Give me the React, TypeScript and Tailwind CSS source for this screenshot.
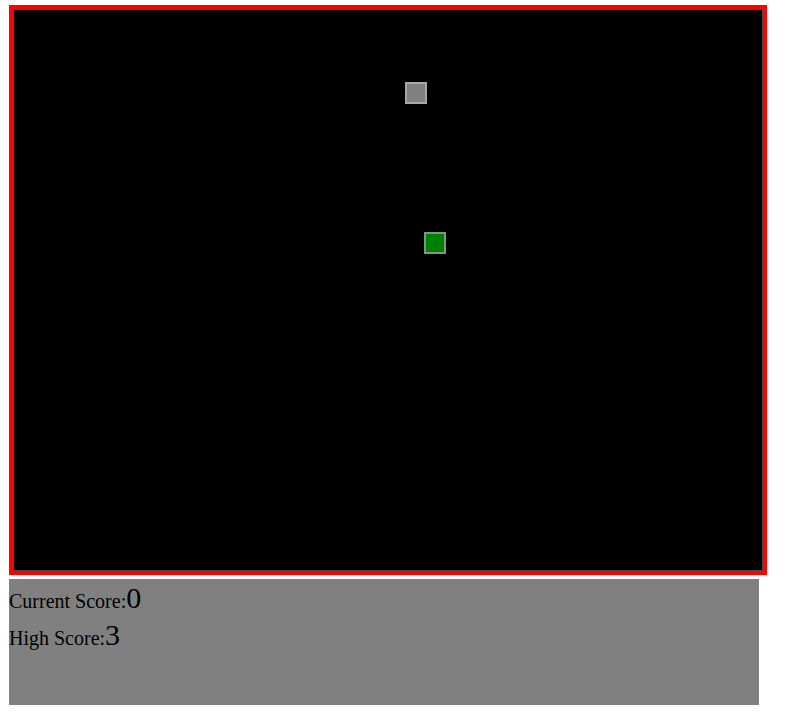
const serif = { fontFamily: '"Liberation Serif", "Times New Roman", serif' }

function Cell({ x, y, fill, edge }: { x: number; y: number; fill: string; edge: string }) {
  return (
    <div
      className="absolute w-[22px] h-[22px] border-2"
      style={{ left: x, top: y, background: fill, borderColor: edge }}
    />
  )
}

export default function App() {
  return (
    <div className="pl-[9px] pt-[5px] bg-white min-h-[715px]" style={serif}>
      <div className="w-[758px] h-[570px] border-4 border-[#ff0000] flex">
        <div className="relative flex-1 bg-black border border-[#4a4a4a]">
          {/* food */}
          <Cell x={391} y={72} fill="#808080" edge="#a8a8a8" />
          {/* snake head */}
          <Cell x={410} y={222} fill="#008000" edge="#7a9a7a" />
        </div>
      </div>

      <div className="mt-[4px] w-[750px] h-[126px] bg-[#808080] text-black text-[20px] pt-[2px]">
        <div className="leading-[33px]">
          Current Score:<span className="text-[30px]">0</span>
        </div>
        <div className="leading-[33px]">
          High Score:<span className="text-[30px]">3</span>
        </div>
      </div>
    </div>
  )
}
